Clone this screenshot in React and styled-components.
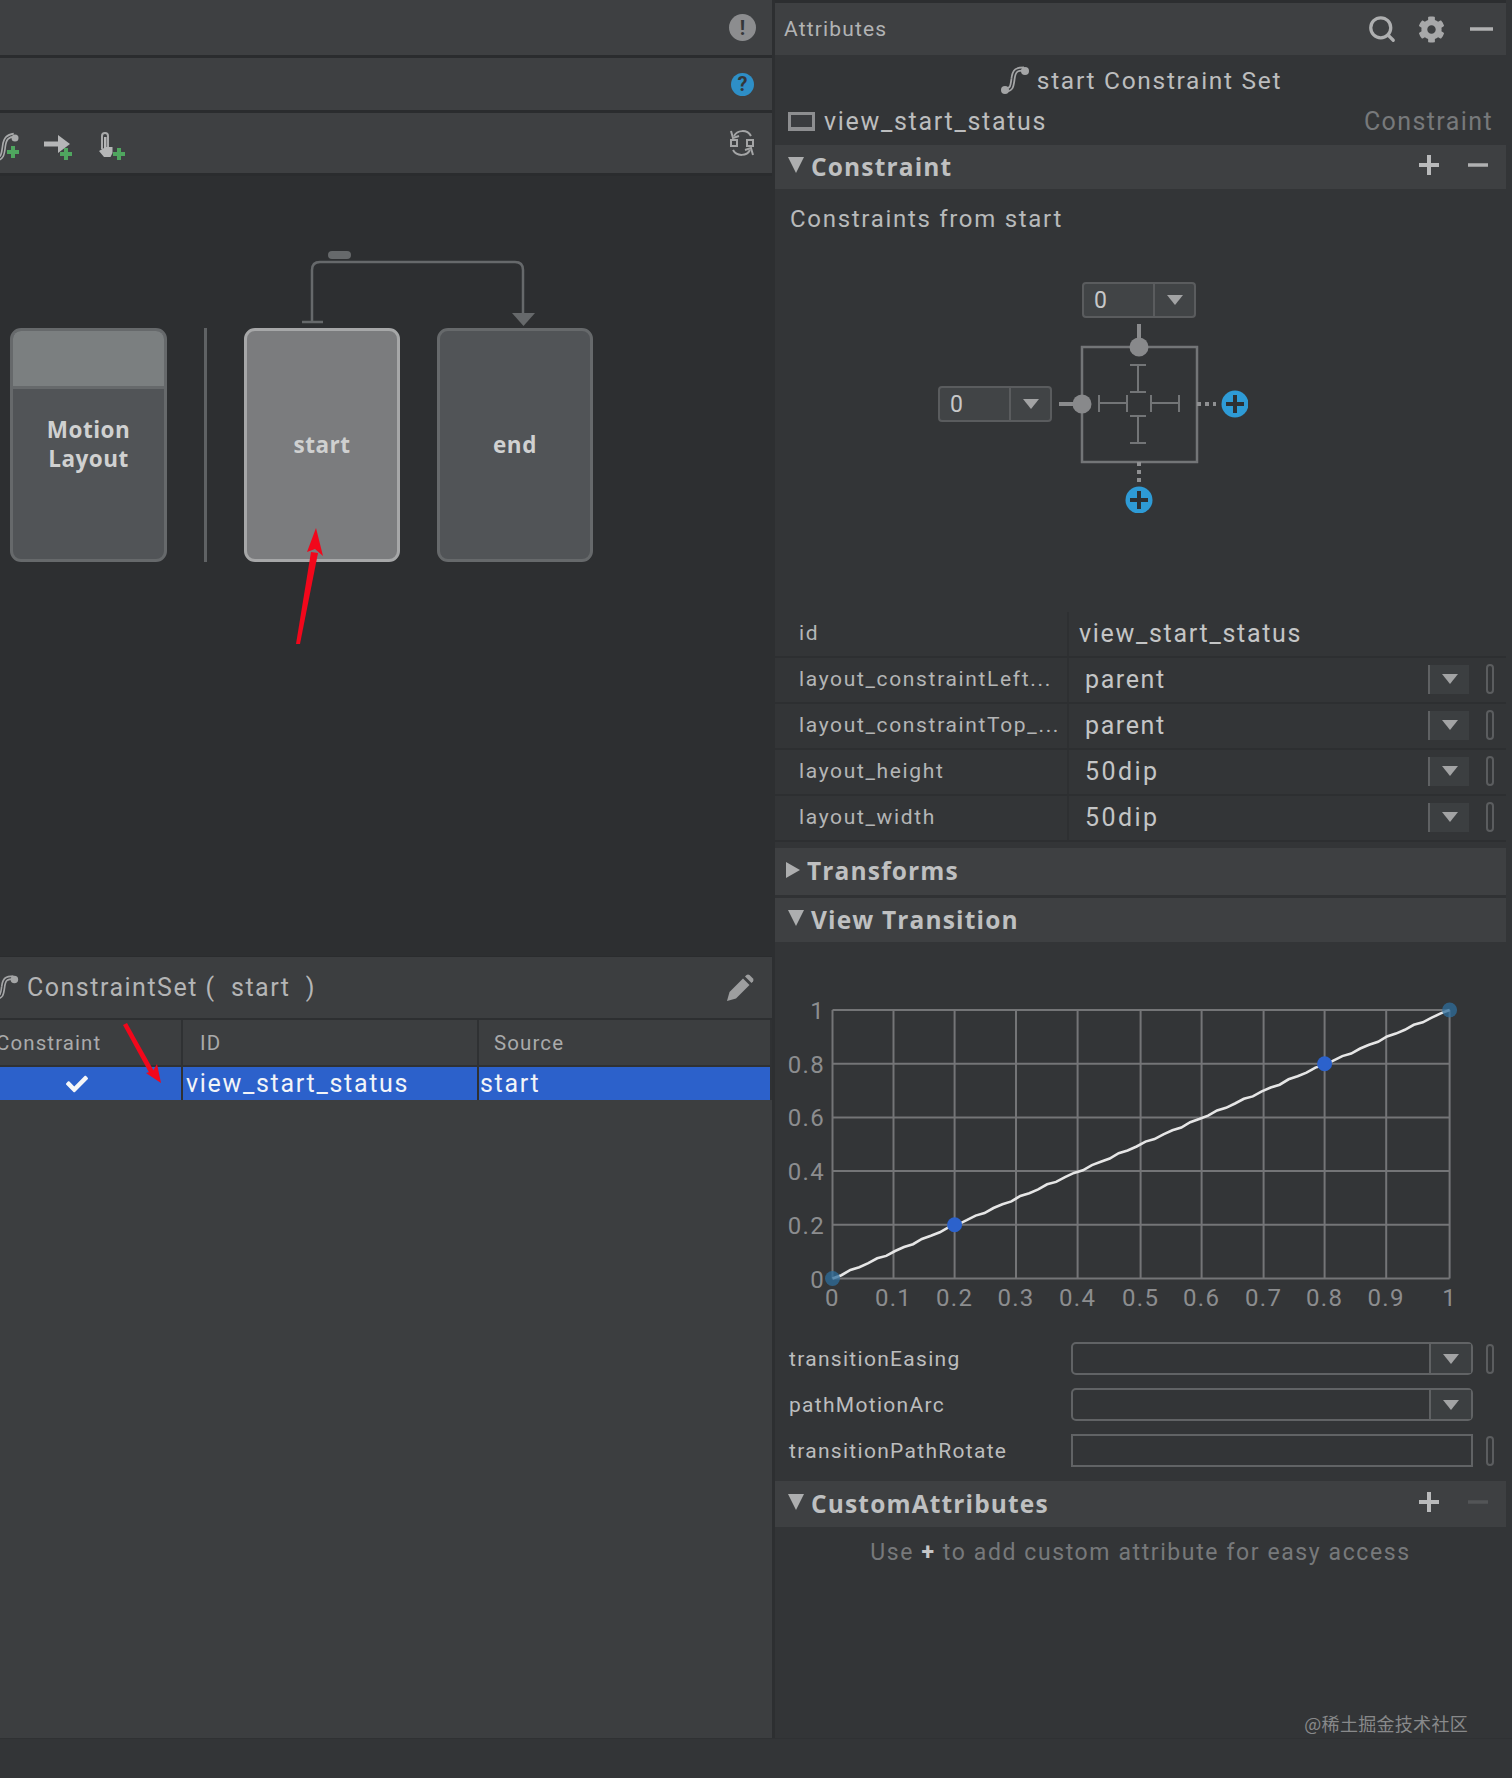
import React from 'react'
import styled, { createGlobalStyle } from 'styled-components'
import { Search } from 'lucide-react'
import { FaCog, FaCheck } from 'react-icons/fa'

const GlobalStyle = createGlobalStyle`
    html, body {
        margin: 0;
        padding: 0;
        background: #333537;
    }
    * {
        box-sizing: border-box;
    }
`

const Page = styled.div`
    width: 1512px;
    height: 1778px;
    display: flex;
    flex-direction: column;
    background: #333537;
    color: #bcbdbe;
    font-family: Roboto, "Liberation Sans", sans-serif;
    overflow: hidden;
`

const Main = styled.div`
    height: 1739px;
    display: flex;
    flex-shrink: 0;
    border-bottom: 1px solid #2f3133;
`

const Left = styled.div`
    position: relative;
    width: 772px;
    flex-shrink: 0;
    display: flex;
    flex-direction: column;
    background: #3c3e40;
`

const Overlay = styled.svg`
    position: absolute;
    top: 0;
    left: 0;
    pointer-events: none;
`

const Bar = styled.div`
    height: ${p => p.$h}px;
    flex-shrink: 0;
    display: flex;
    align-items: center;
    justify-content: space-between;
    background: #3e4042;
    border-bottom: 3px solid #2a2c2e;
    padding-right: 17px;
`

const Tools = styled.div`
    display: flex;
    gap: 23px;
    margin-left: -10px;
    margin-top: 4px;
`

const Badge = styled.div`
    width: ${p => p.$size}px;
    height: ${p => p.$size}px;
    margin-right: ${p => (25 - p.$size) / 2}px;
    border-radius: 50%;
    background: ${p => p.$bg};
    color: #34373a;
    display: flex;
    align-items: center;
    justify-content: center;
    font-size: 20px;
    font-weight: 700;
`

const Canvas = styled.div`
    position: relative;
    height: 780px;
    flex-shrink: 0;
    display: flex;
    align-items: flex-start;
    gap: 37px;
    padding: 152px 0 0 10px;
    background: #2d2f31;
`

const Links = styled.svg`
    position: absolute;
    top: 0;
    left: 0;
`

const Card = styled.div`
    position: relative;
    width: ${p => p.$w}px;
    height: 234px;
    flex-shrink: 0;
    display: flex;
    align-items: center;
    justify-content: center;
    text-align: center;
    overflow: hidden;
    padding-bottom: 2px;
    border-radius: 11px;
    border: 3px solid ${p => (p.$active ? '#a6a7a8' : '#66696b')};
    background: ${p => (p.$active ? '#7b7c7e' : '#515457')};
    color: ${p => (p.$active ? '#cfd0d0' : '#d0d1d1')};
    font-family: "Open Sans", Roboto, sans-serif;
    font-size: 22.5px;
    font-weight: 700;
    line-height: 29px;
    letter-spacing: 0.5px;
`

const CardHead = styled.div`
    position: absolute;
    top: 0;
    left: 0;
    right: 0;
    height: 58px;
    background: #7b7f80;
    border-bottom: 3px solid #66696b;
`

const Separator = styled.div`
    width: 3px;
    height: 234px;
    flex-shrink: 0;
    background: #5f6264;
`

const SetHeader = styled.div`
    height: 64px;
    flex-shrink: 0;
    display: flex;
    align-items: center;
    background: #3c3e40;
    border-top: 1px solid #2a2c2e;
    border-bottom: 2px solid #2d2f31;
    padding-right: 18px;
    font-size: 25px;
    letter-spacing: 1.5px;
    color: #b4b5b6;
    white-space: pre;
`

const SetIcon = styled.div`
    display: flex;
    margin-left: -10px;
`

const SetTitle = styled.div`
    flex: 1;
    margin-left: 7px;
`

const TableRow = styled.div`
    height: ${p => p.$h}px;
    flex-shrink: 0;
    display: grid;
    grid-template-columns: 183px 296px 1fr;
    background: ${p => (p.$selected ? '#2c61cb' : '#3c3e40')};
    color: ${p => (p.$selected ? '#f2f4f8' : '#a9aaab')};
    font-size: ${p => (p.$selected ? 25 : 20.5)}px;
    letter-spacing: ${p => (p.$selected ? 1.7 : 1.1)}px;
    border-bottom: ${p => (p.$selected ? 0 : 2)}px solid #2f3133;
`

const Cell = styled.div`
    display: flex;
    align-items: center;
    justify-content: ${p => (p.$center ? 'center' : 'flex-start')};
    padding-left: ${p => p.$pad || 0}px;
    padding-right: ${p => (p.$center ? 28 : 0)}px;
    margin-left: ${p => p.$shift || 0}px;
    border-right: 2px solid #2f3133;
    overflow: visible;
    white-space: nowrap;
`

const Right = styled.div`
    width: 734px;
    flex-shrink: 0;
    display: flex;
    flex-direction: column;
    border-left: 3px solid #2d2f31;
    background: #333537;
`

const AttrHeader = styled.div`
    height: 55px;
    flex-shrink: 0;
    display: flex;
    align-items: center;
    gap: 21px;
    background: #3e4042;
    border-top: 3px solid #2c2e30;
    padding: 0 13px 0 9px;
    font-size: 21px;
    letter-spacing: 1.15px;
    color: #b2b3b4;
`

const HeaderMinus = styled.div`
    display: flex;
    margin-left: 4px;
`

const Spacer = styled.div`
    flex: 1;
`

const TitleRow = styled.div`
    height: 50px;
    flex-shrink: 0;
    display: flex;
    align-items: center;
    justify-content: center;
    gap: 6px;
    font-size: 24.5px;
    letter-spacing: 1.7px;
    color: #bcbdbe;
`

const NameRow = styled.div`
    height: 40px;
    flex-shrink: 0;
    display: flex;
    align-items: center;
    justify-content: space-between;
    padding: 0 13px 8px 13px;
    font-size: 25px;
    letter-spacing: 1.7px;
`

const NameLeft = styled.div`
    display: flex;
    align-items: center;
    gap: 9px;
`

const ViewIcon = styled.div`
    width: 27px;
    height: 19px;
    background: #3a3c3f;
    border: 3px solid #8d8e90;
    border-bottom-width: 4px;
`

const Dim = styled.span`
    color: #77797b;
    letter-spacing: 1.4px;
`

const Section = styled.div`
    height: ${p => p.$h}px;
    flex-shrink: 0;
    display: flex;
    align-items: center;
    margin-top: ${p => p.$top || 0}px;
    padding: 0 18px 2px ${p => (p.$open ? 13 : 11)}px;
    background: #3e4042;
    border-bottom: ${p => (p.$line ? 3 : 0)}px solid #303234;
    font-family: "Open Sans", Roboto, sans-serif;
    font-size: 24.5px;
    font-weight: 700;
    letter-spacing: 1.15px;
    color: #bfc0c1;
`

const Caret = styled.div`
    width: 0;
    height: 0;
    margin-top: -2px;
    margin-right: 7px;
    ${p => p.$open
        ? 'border-left: 8px solid transparent; border-right: 8px solid transparent; border-top: 16px solid #adaeaf;'
        : 'border-top: 8px solid transparent; border-bottom: 8px solid transparent; border-left: 14px solid #adaeaf;'}
`

const PlusMinus = styled.div`
    display: flex;
    align-items: center;
    gap: 28px;
    margin-top: -2px;
`

const Subhead = styled.div`
    padding: 14px 0 0 15px;
    line-height: 32px;
    font-size: 24px;
    letter-spacing: 1.7px;
    color: #b8babb;
`

const Widget = styled.div`
    position: relative;
    width: 310px;
    height: 231px;
    margin: 47px 0 99px 163px;
    flex-shrink: 0;
`

const WidgetDrawing = styled.svg`
    position: absolute;
    top: 0;
    left: 0;
`

const MarginBox = styled.div`
    position: absolute;
    top: ${p => p.$top}px;
    left: ${p => p.$left}px;
    width: 114px;
    height: 36px;
    display: grid;
    grid-template-columns: 71px 1fr;
    background: #414446;
    border: 2px solid #5a5c5e;
    border-radius: 4px;
    font-size: 23px;
    color: #c7c8c9;
`

const MarginValue = styled.div`
    display: flex;
    align-items: center;
    padding-left: 10px;
    border-right: 2px solid #5a5c5e;
`

const ArrowSlot = styled.div`
    display: flex;
    align-items: center;
    justify-content: center;
`

const DownArrow = styled.div`
    width: 0;
    height: 0;
    border-left: 8px solid transparent;
    border-right: 8px solid transparent;
    border-top: 10px solid #a2a3a4;
`

const AttrRow = styled.div`
    height: 46px;
    flex-shrink: 0;
    display: grid;
    grid-template-columns: 294px 1fr;
    border-bottom: 2px solid #2d2f31;
`

const AttrName = styled.div`
    display: flex;
    align-items: center;
    padding: 0 0 2px 24px;
    border-right: 2px solid #2e3032;
    font-size: 21px;
    letter-spacing: 1.65px;
    white-space: nowrap;
    overflow: hidden;
    color: #b4b5b6;
`

const AttrValue = styled.div`
    display: flex;
    align-items: center;
    padding: 0 0 2px ${p => p.$pad}px;
    font-size: 25px;
    letter-spacing: ${p => p.$track}px;
    color: #c4c5c6;
`

const DropButton = styled.div`
    width: 41px;
    height: 29px;
    margin-left: auto;
    display: flex;
    align-items: center;
    justify-content: center;
    background: #3c3f41;
    border-left: 2px solid #5f6163;
`

const Pill = styled.div`
    width: 8px;
    height: 30px;
    flex-shrink: 0;
    margin: 0 12px 0 ${p => p.$gap}px;
    border: 2px solid #5b5d5f;
    border-radius: 4px;
    visibility: ${p => (p.$hidden ? 'hidden' : 'visible')};
`

const Chart = styled.svg`
    display: block;
    flex-shrink: 0;
`

const Fields = styled.div`
    display: flex;
    flex-direction: column;
    gap: 13px;
    margin-bottom: 14px;
`

const Field = styled.div`
    height: 33px;
    display: flex;
    align-items: center;
    padding-left: 14px;
`

const FieldLabel = styled.div`
    width: 282px;
    flex-shrink: 0;
    font-size: 21px;
    letter-spacing: 1.3px;
    color: #bcbdbe;
`

const FieldBox = styled.div`
    width: 402px;
    height: 33px;
    flex-shrink: 0;
    display: flex;
    justify-content: flex-end;
    border: 2px solid #616365;
    border-radius: ${p => (p.$square ? 0 : 5)}px;
`

const FieldDrop = styled.div`
    width: 42px;
    display: flex;
    align-items: center;
    justify-content: center;
    background: #3c3f41;
    border-left: 2px solid #5f6163;
`

const Hint = styled.div`
    padding-top: 11px;
    line-height: 30px;
    text-align: center;
    font-size: 23px;
    letter-spacing: 1.6px;
    color: #77797b;
`

const HintPlus = styled.span`
    color: #c5c6c7;
    font-weight: 700;
`

const Watermark = styled.div`
    margin-top: auto;
    padding: 0 38px 2px 0;
    text-align: right;
    font-family: "Noto Sans CJK SC", Roboto, sans-serif;
    font-size: 18px;
    letter-spacing: 0.3px;
    color: #88898a;
`

const GREEN = '#4fa65f'
const BLUE = '#2e9bd6'

const CurveIcon = ({ size = 32 }) => (
    <svg width={size} height={size} viewBox="0 0 32 32" fill="none">
        <path d="M6 26 C13 26 13 22 14 15 C15 6 18 5 25 5" stroke="#a4a5a6" strokeWidth="5" />
        <path d="M6 26 C13 26 13 22 14 15 C15 6 18 5 25 5" stroke="#35373a" strokeWidth="1.4" />
        <circle cx="26" cy="7" r="4" fill="#a4a5a6" />
        <circle cx="6" cy="26" r="4" fill="#a4a5a6" />
    </svg>
)

const AddCurve = () => (
    <svg width="30" height="32" viewBox="0 0 30 32" fill="none">
        <path d="M6 30 C13 30 13 24 14 17 C15 9 18 7 24 6" stroke="#a9aaab" strokeWidth="4.5" />
        <path d="M6 30 C13 30 13 24 14 17 C15 9 18 7 24 6" stroke="#3e4042" strokeWidth="1.2" />
        <circle cx="25" cy="9" r="3.5" fill="#a9aaab" />
        <path d="M23 17v12M17 23h12" stroke={GREEN} strokeWidth="4" />
    </svg>
)

const AddArrow = () => (
    <svg width="30" height="32" viewBox="0 0 30 32" fill="none">
        <path d="M1 15h17" stroke="#b5b6b7" strokeWidth="5" />
        <path d="M15 6l12 9-12 9z" fill="#b5b6b7" />
        <path d="M23 19v12M17 25h12" stroke={GREEN} strokeWidth="4" />
    </svg>
)

const AddTouch = () => (
    <svg width="30" height="32" viewBox="0 0 30 32" fill="none">
        <path d="M6 20V7a3 3 0 0 1 6 0v13" stroke="#a9aaab" strokeWidth="2" />
        <path d="M3 22l5-3V8h2.500v10h6v6l-2 4H8z" fill="#b5b6b7" />
        <path d="M23 19v12M17 25h12" stroke={GREEN} strokeWidth="4" />
    </svg>
)

const SyncIcon = () => (
    <svg width="26" height="30" viewBox="0 0 26 30" fill="none" stroke="#a4a5a6" strokeWidth="2">
        <path d="M5 8 C8 2 18 1 22 8" />
        <path d="M2 3l2 7 6-2" />
        <path d="M21 22 C18 28 8 29 4 22" />
        <path d="M24 27l-2-7-6 2" />
        <rect x="2" y="12" width="6" height="6" />
        <rect x="18" y="12" width="6" height="6" />
    </svg>
)

const PencilIcon = () => (
    <svg width="28" height="28" viewBox="0 0 28 28" fill="#9d9e9f">
        <path d="M1 27L3.500 18L17 4.500L23.500 11L10 24.500Z" />
        <path d="M19 2.500L20.500 1Q22 0 23.500 1L27 4.500Q28 6 27 7.500L25.500 9Z" />
    </svg>
)

const Plus = ({ dim }) => (
    <svg width="22" height="22" viewBox="0 0 22 22">
        <path d="M11 1v20M1 11h20" stroke={dim ? '#535557' : '#b9babb'} strokeWidth="4" />
    </svg>
)

const Minus = ({ dim, w = 20 }) => (
    <svg width={w} height="22" viewBox={`0 0 ${w} 22`}>
        <path d={`M0 11h${w}`} stroke={dim ? '#535557' : '#b0b1b2'} strokeWidth="3.500" />
    </svg>
)

const AddDot = ({ cx, cy }) => (
    <g>
        <circle cx={cx} cy={cy} r="13.500" fill={BLUE} />
        <path d={`M${cx} ${cy - 9}v18M${cx - 9} ${cy}h18`} stroke="#2d3033" strokeWidth="4" />
    </g>
)

const ConstraintWidget = () => (
    <WidgetDrawing width="310" height="231" viewBox="0 0 310 231" fill="none">
        <rect x="144" y="65" width="115" height="115" stroke="#737577" strokeWidth="2.500" />
        <path d="M201 42v20M121 122h20" stroke="#8a8b8d" strokeWidth="4" />
        <circle cx="201" cy="65" r="9.500" fill="#88898b" />
        <circle cx="144" cy="122" r="9.500" fill="#88898b" />
        <g stroke="#737577" strokeWidth="2">
            <path d="M192 83h16M200 83v27M192 110h16" />
            <path d="M192 134h16M200 134v27M192 161h16" />
            <path d="M161 113v17M161 121h28M189 113v17" />
            <path d="M213 113v17M213 121h28M241 113v17" />
        </g>
        <path d="M259 122h19M201 180v20" stroke="#8f9092" strokeWidth="4" strokeDasharray="4 4" />
        <AddDot cx={297} cy={122} />
        <AddDot cx={201} cy={218} />
    </WidgetDrawing>
)

// the grid in the screenshot is not quite even, so the columns are listed
const gridX = [57.5, 118.5, 179.6, 241, 302.6, 365.6, 426.6, 488.6, 549.6, 611.2, 674.6]
const gridTicks = [0, 0.1, 0.2, 0.3, 0.4, 0.5, 0.6, 0.7, 0.8, 0.9, 1]

const EasingChart = () => {
    const top = 68
    const height = 268.5
    const ys = [0, 0.2, 0.4, 0.6, 0.8, 1]
    const py = v => top + height - v * height
    const left = gridX[0]
    const right = gridX[10]
    const wiggle = Array.from({ length: 70 }, (_, i) => {
        const t = i / 69
        const off = i === 0 || i === 69 ? 0 : Math.sin(i * 2.3) * 0.8
        return `${(left + t * (right - left)).toFixed(1)},${(py(t) + off).toFixed(1)}`
    }).join(' ')
    return (
        <Chart width="731" height="400" viewBox="0 0 731 400" fill="none">
            {gridX.map(x => (
                <path key={x} d={`M${x} ${top}V${top + height}`} stroke="#747577" strokeWidth="2" />
            ))}
            {ys.map(v => (
                <path key={v} d={`M${left} ${py(v)}H${right}`} stroke="#747577" strokeWidth="2" />
            ))}
            <polyline points={wiggle} stroke="#e6e6e6" strokeWidth="2.600" />
            <circle cx={left} cy={py(0)} r="7.500" fill="#2f6e9c" fillOpacity="0.75" />
            <circle cx={right} cy={py(1)} r="7.500" fill="#2f6e9c" fillOpacity="0.75" />
            <circle cx={gridX[2]} cy={py(0.2)} r="7.500" fill="#2c62cc" />
            <circle cx={gridX[8]} cy={py(0.8)} r="7.500" fill="#2c62cc" />
            <g fill="#8c8d8f" fontSize="24" letterSpacing="1.3" fontFamily="Roboto, sans-serif">
                {gridTicks.map((v, i) => (
                    <text key={v} x={gridX[i]} y="364" textAnchor="middle">{v}</text>
                ))}
                {ys.map(v => (
                    <text key={v} x="50" y={py(v) + 9} textAnchor="end">{v}</text>
                ))}
            </g>
        </Chart>
    )
}

const attributes = [
    { name: 'layout_constraintLeft...', value: 'parent', track: 1.6 },
    { name: 'layout_constraintTop_...', value: 'parent', track: 1.6 },
    { name: 'layout_height', value: '50dip', track: 2.4 },
    { name: 'layout_width', value: '50dip', track: 2.4 },
]

const App = () => {
    return (
        <Page>
            <GlobalStyle />
            <Main>
                <Left>
                    <Bar $h={58}>
                        <span />
                        <Badge $size={27} $bg="#8c8d8f">!</Badge>
                    </Bar>
                    <Bar $h={55}>
                        <span />
                        <Badge $size={23} $bg="#2e8fc7">?</Badge>
                    </Bar>
                    <Bar $h={63}>
                        <Tools>
                            <AddCurve />
                            <AddArrow />
                            <AddTouch />
                        </Tools>
                        <SyncIcon />
                    </Bar>
                    <Canvas>
                        <Links width="772" height="300" viewBox="0 176 772 300" fill="none">
                            <rect x="328" y="251" width="23" height="8" rx="4" fill="#66696b" />
                            <path d="M312 322V270q0-8 8-8H515q8 0 8 8V314" stroke="#66696b" strokeWidth="2.500" />
                            <path d="M302 322h21" stroke="#66696b" strokeWidth="2.500" />
                            <path d="M512 313h23l-11.500 13z" fill="#66696b" />
                        </Links>
                        <Card $w={157}>
                            <CardHead />
                            Motion<br />Layout
                        </Card>
                        <Separator />
                        <Card $w={156} $active>start</Card>
                        <Card $w={156}>end</Card>
                    </Canvas>
                    <SetHeader>
                        <SetIcon><CurveIcon size={30} /></SetIcon>
                        <SetTitle>ConstraintSet (  start  )</SetTitle>
                        <PencilIcon />
                    </SetHeader>
                    <TableRow $h={47}>
                        <Cell $shift={-4}>Constraint</Cell>
                        <Cell $pad={17}>ID</Cell>
                        <Cell $pad={15}>Source</Cell>
                    </TableRow>
                    <TableRow $h={33} $selected>
                        <Cell $center><FaCheck size={22} color="#f5f6f8" /></Cell>
                        <Cell $pad={3}>view_start_status</Cell>
                        <Cell $pad={1}>start</Cell>
                    </TableRow>
                    <Overlay width="772" height="1739" viewBox="0 0 772 1739">
                        <path d="M296 644L311 552L318 553L300 644z" fill="#f2071b" />
                        <path d="M316 528L323 556L315 549L307 552z" fill="#f2071b" />
                        <path d="M123 1025L127 1023L155 1073L151 1076z" fill="#f2071b" />
                        <path d="M161 1083L146 1073L153 1071L157 1064z" fill="#f2071b" />
                    </Overlay>
                </Left>
                <Right>
                    <AttrHeader>
                        Attributes
                        <Spacer />
                        <Search size={30} strokeWidth={2.6} color="#aeafb0" />
                        <FaCog size={27} color="#a7a8a9" />
                        <HeaderMinus><Minus w={23} /></HeaderMinus>
                    </AttrHeader>
                    <TitleRow>
                        <CurveIcon />
                        start Constraint Set
                    </TitleRow>
                    <NameRow>
                        <NameLeft>
                            <ViewIcon />
                            view_start_status
                        </NameLeft>
                        <Dim>Constraint</Dim>
                    </NameRow>
                    <Section $h={44} $open>
                        <Caret $open />
                        Constraint
                        <Spacer />
                        <PlusMinus>
                            <Plus />
                            <Minus />
                        </PlusMinus>
                    </Section>
                    <Subhead>Constraints from start</Subhead>
                    <Widget>
                        <ConstraintWidget />
                        <MarginBox $top={0} $left={144}>
                            <MarginValue>0</MarginValue>
                            <ArrowSlot><DownArrow /></ArrowSlot>
                        </MarginBox>
                        <MarginBox $top={104} $left={0}>
                            <MarginValue>0</MarginValue>
                            <ArrowSlot><DownArrow /></ArrowSlot>
                        </MarginBox>
                    </Widget>
                    <AttrRow>
                        <AttrName>id</AttrName>
                        <AttrValue $pad={10} $track={1.7}>view_start_status</AttrValue>
                    </AttrRow>
                    {attributes.map(a => (
                        <AttrRow key={a.name}>
                            <AttrName>{a.name}</AttrName>
                            <AttrValue $pad={16} $track={a.track}>
                                {a.value}
                                <DropButton><DownArrow /></DropButton>
                                <Pill $gap={17} />
                            </AttrValue>
                        </AttrRow>
                    ))}
                    <Section $h={50} $line $top={6}>
                        <Caret />
                        Transforms
                    </Section>
                    <Section $h={44} $open>
                        <Caret $open />
                        View Transition
                    </Section>
                    <EasingChart />
                    <Fields>
                        <Field>
                            <FieldLabel>transitionEasing</FieldLabel>
                            <FieldBox><FieldDrop><DownArrow /></FieldDrop></FieldBox>
                            <Pill $gap={13} />
                        </Field>
                        <Field>
                            <FieldLabel>pathMotionArc</FieldLabel>
                            <FieldBox><FieldDrop><DownArrow /></FieldDrop></FieldBox>
                            <Pill $gap={13} $hidden />
                        </Field>
                        <Field>
                            <FieldLabel>transitionPathRotate</FieldLabel>
                            <FieldBox $square />
                            <Pill $gap={13} />
                        </Field>
                    </Fields>
                    <Section $h={46} $open>
                        <Caret $open />
                        CustomAttributes
                        <Spacer />
                        <PlusMinus>
                            <Plus />
                            <Minus dim />
                        </PlusMinus>
                    </Section>
                    <Hint>Use <HintPlus>+</HintPlus> to add custom attribute for easy access</Hint>
                    <Watermark>@稀土掘金技术社区</Watermark>
                </Right>
            </Main>
        </Page>
    )
}

export default App
